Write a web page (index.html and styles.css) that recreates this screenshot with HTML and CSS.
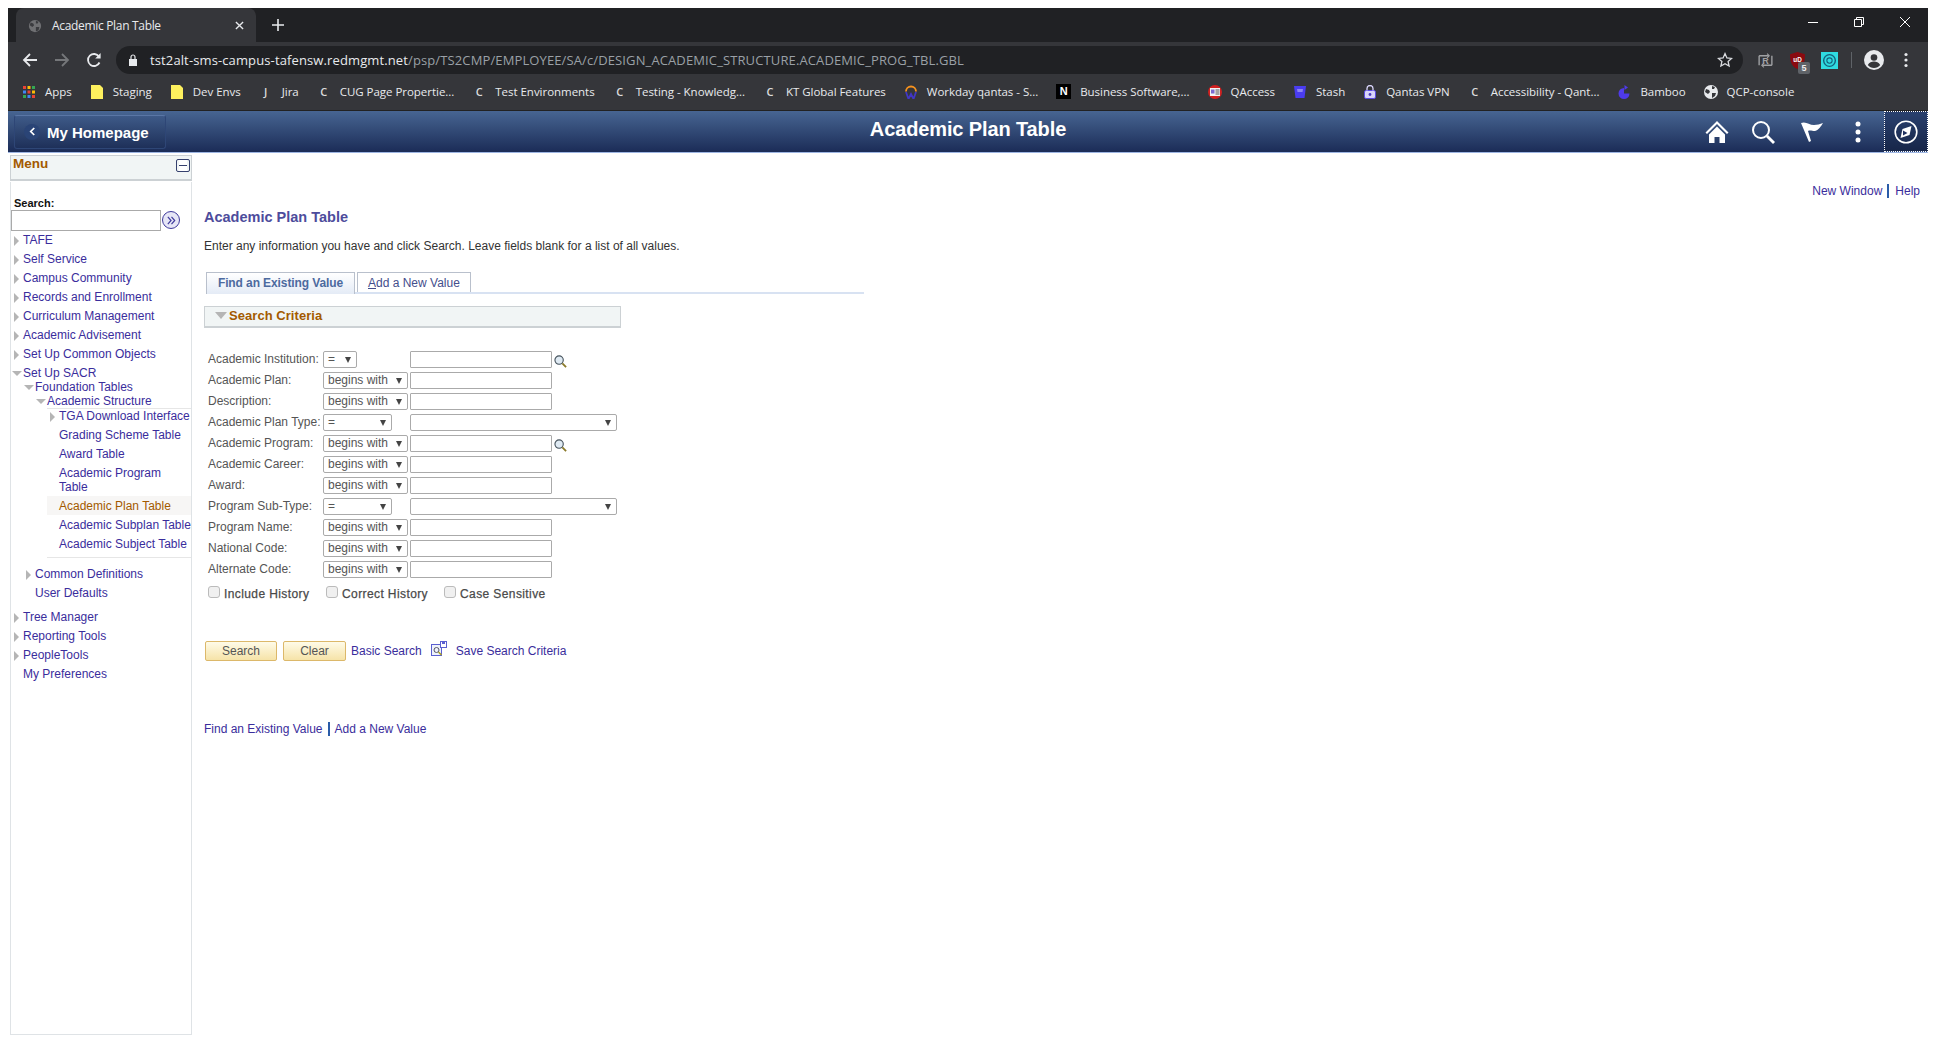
FILE: index.html
```html
<!DOCTYPE html>
<html lang="en">
<head>
<meta charset="utf-8">
<title>Academic Plan Table</title>
<link rel="stylesheet" href="styles.css">
</head>
<body>
<div class="chrome">
  <div class="tabstrip">
    <div class="tab">
      <svg class="fav" viewBox="0 0 16 16"><circle cx="8" cy="8" r="7" fill="#6f7073"/><path d="M3 4l3 1 1 2-2 2-3-2zM9 2l3 1-1 2-2 0zM9 9l4 0-1 4-3 1z" fill="#3a3b3f"/></svg>
      <span class="tab-title">Academic Plan Table</span>
      <svg class="tab-x" viewBox="0 0 10 10"><path d="M1 1l8 8M9 1l-8 8" stroke="#e8eaed" stroke-width="1.5"/></svg>
    </div>
    <svg class="tab-plus" viewBox="0 0 12 12"><path d="M6 0v12M0 6h12" stroke="#e8eaed" stroke-width="1.6"/></svg>
    <div class="winctl">
      <svg viewBox="0 0 12 12"><path d="M1 6.500h10" stroke="#fff"/></svg>
      <svg viewBox="0 0 12 12"><path d="M1.500 3.500h7v7h-7zM3.500 3.500v-2h7v7h-2" fill="none" stroke="#fff"/></svg>
      <svg viewBox="0 0 12 12"><path d="M1 1l10 10M11 1l-10 10" stroke="#fff"/></svg>
    </div>
  </div>
  <div class="toolbar">
    <svg class="nav-ic" viewBox="0 0 16 16"><path d="M15 8H2M8 2L2 8l6 6" fill="none" stroke="#e8eaed" stroke-width="1.8"/></svg>
    <svg class="nav-ic" viewBox="0 0 16 16"><path d="M1 8h13M8 2l6 6-6 6" fill="none" stroke="#75777a" stroke-width="1.8"/></svg>
    <svg class="nav-ic" viewBox="0 0 16 16"><path d="M13.500 10.500A6 6 0 1 1 13 4.600" fill="none" stroke="#e8eaed" stroke-width="1.8"/><path d="M14.600 1v5.400H9.200z" fill="#e8eaed"/></svg>
    <div class="omnibox">
      <svg class="lock" viewBox="0 0 10 12"><path d="M1 5h8v7H1z" fill="#e8eaed"/><path d="M3 5V3a2 2 0 0 1 4 0v2" fill="none" stroke="#e8eaed" stroke-width="1.2"/></svg>
      <span class="url"><span class="host">tst2alt-sms-campus-tafensw.redmgmt.net</span>/psp/TS2CMP/EMPLOYEE/SA/c/DESIGN_ACADEMIC_STRUCTURE.ACADEMIC_PROG_TBL.GBL</span>
      <svg class="star" viewBox="0 0 16 16"><path d="M8 1.600l1.900 4.300 4.700.5-3.500 3.100 1 4.600L8 11.800l-4.100 2.300 1-4.600L1.400 6.400l4.700-.5z" fill="none" stroke="#dadce0" stroke-width="1.3"/></svg>
    </div>
    <div class="ext">
      <svg class="ext-ic" viewBox="0 0 16 16"><path d="M2 3.500V12.500M14 3.500v9M2 3.500h9M14 12.500H5" fill="none" stroke="#a0a1a4" stroke-width="1.300"/><path d="M9.500 1.500l2 2-2 2M6.500 10.500l-2 2 2 2" fill="none" stroke="#a0a1a4"/><text x="8" y="11" class="ext-r">R</text></svg>
      <span class="ublock">
        <svg class="ext-ic" viewBox="0 0 16 16"><path d="M8 0l7 2c0 7-1 11-7 14C2 13 1 9 1 2z" fill="#8a0a10"/><text x="8" y="9.500" class="ub">uD</text></svg>
        <span class="badge">5</span>
      </span>
      <svg class="ext-ic teal" viewBox="0 0 16 16"><rect width="16" height="16" fill="#2fdbe0"/><circle cx="8" cy="8" r="5.500" fill="none" stroke="#14607a" stroke-width="1.300"/><circle cx="8" cy="8" r="2.500" fill="none" stroke="#14607a"/></svg>
      <span class="sep"></span>
      <svg class="acct" viewBox="0 0 20 20"><circle cx="10" cy="10" r="10" fill="#e8eaed"/><circle cx="10" cy="7.500" r="3.300" fill="#35363a"/><path d="M3.800 15c1.500-2.600 3.800-3.500 6.200-3.500s4.700.9 6.200 3.500c-1.500 1.800-3.700 3-6.200 3s-4.700-1.200-6.200-3z" fill="#35363a"/></svg>
      <svg class="kebab" viewBox="0 0 4 16"><circle cx="2" cy="2.500" r="1.600" fill="#e8eaed"/><circle cx="2" cy="8" r="1.600" fill="#e8eaed"/><circle cx="2" cy="13.500" r="1.600" fill="#e8eaed"/></svg>
    </div>
  </div>
  <div class="bookmarks">
    <a class="bm"><svg class="bi" viewBox="0 0 14 14"><path d="M1 1h3v3H1z" fill="#ea4335"/><path d="M5.500 1h3v3h-3z" fill="#fbbc05"/><path d="M10 1h3v3h-3z" fill="#34a853"/><path d="M1 5.500h3v3H1z" fill="#4285f4"/><path d="M5.500 5.500h3v3h-3z" fill="#ea4335"/><path d="M10 5.500h3v3h-3z" fill="#fbbc05"/><path d="M1 10h3v3H1z" fill="#34a853"/><path d="M5.500 10h3v3h-3z" fill="#4285f4"/><path d="M10 10h3v3h-3z" fill="#ea4335"/></svg>Apps</a>
    <a class="bm"><svg class="bi" viewBox="0 0 14 14"><path d="M1 0h9l3 3v11H1z" fill="#fdf05e"/></svg>Staging</a>
    <a class="bm"><svg class="bi" viewBox="0 0 14 14"><path d="M1 0h9l3 3v11H1z" fill="#fdf05e"/></svg>Dev Envs</a>
    <a class="bm"><span class="bl">J</span>Jira</a>
    <a class="bm"><span class="bl">C</span>CUG Page Propertie...</a>
    <a class="bm"><span class="bl">C</span>Test Environments</a>
    <a class="bm"><span class="bl">C</span>Testing - Knowledg...</a>
    <a class="bm"><span class="bl">C</span>KT Global Features</a>
    <a class="bm"><svg class="bi" viewBox="0 0 14 14"><path d="M2 6.500a5 5 0 0 1 10 0" fill="none" stroke="#f6921e" stroke-width="1.800"/><path d="M2 7l2.500 7L7 9l2.500 5L12 7" fill="none" stroke="#4136c4" stroke-width="1.800"/></svg>Workday qantas - S...</a>
    <a class="bm"><span class="bn">N</span>Business Software,...</a>
    <a class="bm"><svg class="bi" viewBox="0 0 14 14"><circle cx="7" cy="7" r="7" fill="#d02020"/><rect x="2" y="3" width="10" height="8" fill="#f4f4f4"/><rect x="3" y="4.500" width="3.500" height="4" fill="#7a6ad0"/><path d="M7.500 5h4M7.500 7h4M7.500 9h4" stroke="#555"/></svg>QAccess</a>
    <a class="bm"><svg class="bi" viewBox="0 0 14 14"><path d="M1 1h12l-1.500 12h-9z" fill="#4a3cf0"/><path d="M4 4h6l-.5 3H4.500z" fill="#8d84f5"/></svg>Stash</a>
    <a class="bm"><svg class="bi" viewBox="0 0 14 14"><rect x="1.500" y="5.500" width="11" height="8" rx="1.500" fill="#d8d4fa" stroke="#5a4ae0"/><path d="M4 5.500V3.500a3 3 0 0 1 6 0v2" fill="none" stroke="#d8d4fa" stroke-width="1.300"/><circle cx="7" cy="9.500" r="1.400" fill="#4a3cc0"/></svg>Qantas VPN</a>
    <a class="bm"><span class="bl">C</span>Accessibility - Qant...</a>
    <a class="bm"><svg class="bi" viewBox="0 0 14 14"><path d="M7 3a5.500 5.500 0 1 0 5.500 5.500H7z" fill="#4f3ae8"/><path d="M7.500 0v5l3.500-2.500z" fill="#4f3ae8"/></svg>Bamboo</a>
    <a class="bm"><svg class="bi" viewBox="0 0 14 14"><circle cx="7" cy="7" r="7" fill="#e8eaed"/><path d="M2 4l3 1 1 2-2 2-3-2zM8 1l3 1-1 2-2 0zM8 8l4 0-1 3-3 2z" fill="#35363a"/></svg>QCP-console</a>
  </div>
</div>
<header class="ps-bar">
  <div class="home-btn">
    <span class="back-circ"><svg viewBox="0 0 8 10"><path d="M6 1L2 5l4 4" fill="none" stroke="#fff" stroke-width="2"/></svg></span>
    <span class="home-text">My Homepage</span>
  </div>
  <div class="ps-title">Academic Plan Table</div>
  <div class="ps-actions">
    <svg class="pa home" viewBox="0 0 24 24"><path d="M12 1L.5 12.500l1.500 1.500L12 4l10 10 1.500-1.500z" fill="#fff"/><path d="M4 14.500L12 6.500l8 8V23h-5.500v-6h-5v6H4z" fill="#fff"/></svg>
    <svg class="pa search" viewBox="0 0 24 24"><circle cx="10" cy="10" r="8" fill="none" stroke="#fff" stroke-width="2"/><path d="M16 16l7 7" stroke="#fff" stroke-width="2.800"/></svg>
    <svg class="pa flag" viewBox="0 0 24 24"><path d="M1 3c5-2 8 2 13 2 3 0 6-1 9-2-2 3-4 7-8 8-3 0-5-1-7 0l3 10-2 1z" fill="#fff"/></svg>
    <svg class="pa dots" viewBox="0 0 6 24"><circle cx="3" cy="4" r="2.500" fill="#fff"/><circle cx="3" cy="12" r="2.500" fill="#fff"/><circle cx="3" cy="20" r="2.500" fill="#fff"/></svg>
    <div class="nav-bar-btn"><svg viewBox="0 0 24 24"><circle cx="12" cy="12" r="10.800" fill="none" stroke="#fff" stroke-width="1.600"/><path d="M6.500 18l2-9 9-3-2 9z" fill="#fff"/><path d="M9 15.500v-5l4.500 2.500z" fill="#1f3160"/></svg></div>
  </div>
</header>
<div class="page">
  <aside class="menu">
    <div class="menu-head"><span>Menu</span><span class="collapse"></span></div>
    <div class="menu-body">
      <div class="search-label">Search:</div>
      <div class="search-row">
        <input class="menu-search" type="text" aria-label="Search">
        <span class="go"><svg viewBox="0 0 12 12"><path d="M2 2l3.500 4L2 10M6 2l3.500 4L6 10" fill="none" stroke="#3f3a9c" stroke-width="1.300"/></svg></span>
      </div>
      <ul class="tree">
        <li class="node"><i class="tw r"></i><a>TAFE</a></li>
        <li class="node"><i class="tw r"></i><a>Self Service</a></li>
        <li class="node"><i class="tw r"></i><a>Campus Community</a></li>
        <li class="node"><i class="tw r"></i><a>Records and Enrollment</a></li>
        <li class="node"><i class="tw r"></i><a>Curriculum Management</a></li>
        <li class="node"><i class="tw r"></i><a>Academic Advisement</a></li>
        <li class="node"><i class="tw r"></i><a>Set Up Common Objects</a></li>
        <li class="node open"><i class="tw d"></i><a>Set Up SACR</a></li>
        <li>
          <ul class="sub">
            <li class="node open lead"><i class="tw d"></i><a>Foundation Tables</a></li>
            <li>
              <ul class="sub">
                <li class="node open lead"><i class="tw d"></i><a>Academic Structure</a></li>
                <li>
                  <ul class="sub leaves">
                    <li class="node lead"><i class="tw r"></i><a>TGA Download Interface</a></li>
                    <li class="node"><i class="tw"></i><a>Grading Scheme Table</a></li>
                    <li class="node"><i class="tw"></i><a>Award Table</a></li>
                    <li class="node"><i class="tw"></i><a>Academic Program<br>Table</a></li>
                    <li class="node current"><i class="tw"></i><a>Academic Plan Table</a></li>
                    <li class="node"><i class="tw"></i><a class="nowrap">Academic Subplan Table</a></li>
                    <li class="node"><i class="tw"></i><a>Academic Subject Table</a></li>
                  </ul>
                </li>
              </ul>
            </li>
            <li class="node common"><i class="tw r"></i><a>Common Definitions</a></li>
            <li class="node"><i class="tw"></i><a>User Defaults</a></li>
          </ul>
        </li>
        <li class="node after"><i class="tw r"></i><a>Tree Manager</a></li>
        <li class="node"><i class="tw r"></i><a>Reporting Tools</a></li>
        <li class="node"><i class="tw r"></i><a>PeopleTools</a></li>
        <li class="node"><i class="tw"></i><a>My Preferences</a></li>
      </ul>
    </div>
  </aside>
  <main class="content">
    <div class="toplinks"><a>New Window</a><span class="vbar"></span><a>Help</a></div>
    <h1 class="pagetitle">Academic Plan Table</h1>
    <p class="instr">Enter any information you have and click Search. Leave fields blank for a list of all values.</p>
    <div class="tabs">
      <span class="ptab active">Find an Existing Value</span>
      <span class="ptab"><u>A</u>dd a New Value</span>
    </div>
    <div class="crit"><i class="crit-arrow"></i>Search Criteria</div>
    <div class="form">
      <label>Academic Institution:</label><span class="sel s-xs">=</span><span class="inp-wrap"><span class="inp"></span><svg class="lens" viewBox="0 0 14 14"><circle cx="5.500" cy="5.500" r="4.500" fill="#dfeaf3" stroke="#45525c" stroke-width="1.200"/><path d="M9 9l4 4" stroke="#8a7a2a" stroke-width="2"/></svg></span>
      <label>Academic Plan:</label><span class="sel">begins with</span><span class="inp"></span>
      <label>Description:</label><span class="sel">begins with</span><span class="inp"></span>
      <label>Academic Plan Type:</label><span class="sel s-md">=</span><span class="sel s-lg"></span>
      <label>Academic Program:</label><span class="sel">begins with</span><span class="inp-wrap"><span class="inp"></span><svg class="lens" viewBox="0 0 14 14"><circle cx="5.500" cy="5.500" r="4.500" fill="#dfeaf3" stroke="#45525c" stroke-width="1.200"/><path d="M9 9l4 4" stroke="#8a7a2a" stroke-width="2"/></svg></span>
      <label>Academic Career:</label><span class="sel">begins with</span><span class="inp"></span>
      <label>Award:</label><span class="sel">begins with</span><span class="inp"></span>
      <label>Program Sub-Type:</label><span class="sel s-md">=</span><span class="sel s-lg"></span>
      <label>Program Name:</label><span class="sel">begins with</span><span class="inp"></span>
      <label>National Code:</label><span class="sel">begins with</span><span class="inp"></span>
      <label>Alternate Code:</label><span class="sel">begins with</span><span class="inp"></span>
    </div>
    <div class="checks">
      <label class="chk"><input type="checkbox">Include History</label>
      <label class="chk"><input type="checkbox">Correct History</label>
      <label class="chk"><input type="checkbox">Case Sensitive</label>
    </div>
    <div class="actions">
      <span class="btn b-search">Search</span>
      <span class="btn b-clear">Clear</span>
      <a class="basic">Basic Search</a>
      <svg class="save-ic" viewBox="0 0 16 16"><rect x=".5" y="3.500" width="10" height="11" fill="#eef2fb" stroke="#5a5fd0"/><circle cx="5.500" cy="9" r="2.500" fill="none" stroke="#556"/><path d="M7.500 11l3 3" stroke="#a8a020" stroke-width="1.500"/><rect x="9.500" y=".5" width="6" height="6" fill="#fff" stroke="#5a5fd0"/><rect x="11" y="1" width="3" height="2" fill="#5a5fd0"/></svg>
      <a class="savesc">Save Search Criteria</a>
    </div>
    <div class="botlinks"><a>Find an Existing Value</a><span class="vbar"></span><a>Add a New Value</a></div>
  </main>
</div>
</body>
</html>
```

FILE: styles.css
```css
* { box-sizing: border-box; }
html, body { margin: 0; background: #fff; }
body { padding: 8px 8px 0; height: 1056px; overflow: hidden; font-family: "Liberation Sans", Arial, sans-serif; font-size: 12px; }
ul { list-style: none; margin: 0; padding: 0; }
svg { display: block; flex: none; }

/* browser chrome */
.chrome { font-family: "Open Sans", "Noto Sans", sans-serif; color: #e8eaed; }
.tabstrip { height: 34px; background: #202124; display: flex; align-items: flex-end; padding-left: 8px; }
.tab { width: 240px; height: 34px; background: #35363a; border-radius: 8px 8px 0 0; display: flex; align-items: center; padding: 1px 0 0 11px; font-size: 12px; }
.fav { width: 14px; height: 14px; margin: 0 10px 0 1px; }
.tab-title { flex: 1; letter-spacing: -.32px; }
.tab-x { width: 9px; height: 9px; margin-right: 12px; }
.tab-plus { width: 12px; height: 12px; margin: 0 0 11px 16px; }
.winctl { margin-left: auto; align-self: flex-start; display: flex; gap: 34px; padding: 8px 17px 0 0; }
.winctl svg { width: 12px; height: 12px; }
.toolbar { height: 36px; background: #35363a; display: flex; align-items: center; padding-left: 14px; }
.nav-ic { width: 16px; height: 16px; margin-right: 16px; }
.omnibox { width: 1627px; height: 28px; margin-left: -2px; background: #202124; border-radius: 14px; display: flex; align-items: center; padding-left: 12px; }
.lock { width: 10px; height: 12px; margin-right: 12px; }
.url { flex: 1; font-size: 13px; letter-spacing: .12px; color: #9aa0a6; white-space: nowrap; }
.host { color: #e8eaed; }
.star { width: 16px; height: 16px; margin-right: 10px; }
.ext { display: flex; align-items: center; margin-left: 14px; }
.ext-ic { width: 17px; height: 17px; }
.ext-r { font: bold 8.500px "Liberation Sans", sans-serif; fill: #a0a1a4; text-anchor: middle; }
.ub { font: bold 6px "Liberation Sans", sans-serif; fill: #fff; text-anchor: middle; }
.ublock { display: block; position: relative; margin-left: 15px; }
.badge { position: absolute; left: 9px; top: 10px; width: 12px; height: 12px; background: #5f6368; border-radius: 2px; font: bold 9px/12px "Liberation Sans", sans-serif; color: #eee; text-align: center; }
.teal { margin-left: 15px; }
.sep { width: 1px; height: 16px; background: #5f6368; margin-left: 13px; }
.acct { width: 20px; height: 20px; margin-left: 12px; }
.kebab { width: 4px; height: 16px; margin-left: 20px; }
.bookmarks { height: 32px; background: #35363a; display: flex; align-items: center; padding: 0 0 5px 14px; gap: 18px; font-size: 11.5px; white-space: nowrap; letter-spacing: -.03px; color: #e8eaed; }
.bm { display: flex; align-items: center; gap: 9px; }
.bi { width: 14px; height: 14px; }
.bl { width: 14px; text-align: center; font-size: 11px; font-weight: 600; color: #ddd; }
.bn { width: 15px; height: 15px; background: #000; color: #fff; font: bold 11px/15px "Liberation Sans", sans-serif; text-align: center; }

/* PeopleSoft banner */
.ps-bar { height: 43px; display: flex; align-items: center; background: linear-gradient(#476592, #1b2c57); border-top: 1px solid #222; border-bottom: 1px solid #9db5e2; position: relative; color: #fff; padding-left: 6px; }
.home-btn { width: 152px; height: 34px; border-radius: 3px; border: 1px solid #2e4676; border-top-color: #5a76a5; background: linear-gradient(#3e5a88, #1e3059); display: flex; align-items: center; padding-left: 9px; gap: 7px; }
.back-circ { width: 16px; height: 16px; border-radius: 50%; background: #2a4476; display: flex; align-items: center; justify-content: center; }
.back-circ svg { width: 7px; height: 9px; }
.home-text { font-size: 15px; font-weight: bold; padding-top: 1px; }
.ps-title { flex: 1; text-align: center; font-size: 20px; font-weight: bold; letter-spacing: -.12px; margin-left: -158px; margin-top: -5px; }
.ps-actions { position: absolute; right: 0; top: 0; bottom: 0; display: flex; align-items: center; }
.pa { width: 24px; height: 24px; }
.home { margin-right: 22px; }
.search { margin-right: 25px; }
.flag { margin-right: 31px; }
.dots { width: 6px; margin-right: 23px; }
.nav-bar-btn { width: 44px; height: 100%; border: 1px dotted #fff; background: linear-gradient(#29406e, #172649); display: flex; align-items: center; justify-content: center; }
.nav-bar-btn svg { width: 24px; height: 24px; }

/* page */
.page { display: flex; align-items: flex-start; }
.menu { width: 182px; margin: 2px 0 0 2px; flex: none; color: #3a2d9c; }
.menu-head { height: 26px; background: #f1f5f5; border: 1px solid #ccd1d4; border-bottom-width: 2px; display: flex; justify-content: space-between; padding: 0 1px 0 2px; font-size: 13.500px; font-weight: bold; color: #a35a00; }
.collapse { width: 14px; height: 13px; margin-top: 3px; border: 1px solid #35406e; border-radius: 2px; background: linear-gradient(#fff 5px, #35406e 5px, #35406e 6.500px, #fff 6.500px); background-clip: content-box; padding: 0 2px; }
.menu-body { height: 853px; border: 1px solid #dfe3e6; border-top: 0; padding-top: 14px; margin-top: 1px; }
.search-label { font-size: 11px; font-weight: bold; color: #111; padding-left: 3px; line-height: 14px; height: 14px; }
.search-row { display: flex; align-items: center; height: 20px; }
.menu-search { width: 150px; height: 21px; border: 1px solid #aaa; padding: 0; margin: 0 1px 0 0; background: #fff; }
.go { width: 18px; height: 18px; border-radius: 50%; border: 1px solid #3f3a9c; background: #e6e6f6; display: flex; align-items: center; justify-content: center; }
.go svg { width: 11px; height: 11px; }
.tree { font-size: 12px; }
.node { display: flex; line-height: 14px; padding: 3px 0 2px; }
.node.open { padding-bottom: 0; }
.node.lead { padding-top: 0; }
.tw { width: 12px; flex: none; position: relative; display: block; }
.tw.r::before { content: ""; position: absolute; left: 3px; top: 3px; border-left: 5px solid #b5b5b5; border-top: 5px solid transparent; border-bottom: 5px solid transparent; }
.tw.d::before { content: ""; position: absolute; left: 1px; top: 5px; border-top: 5px solid #b5b5b5; border-left: 5px solid transparent; border-right: 5px solid transparent; }
.sub { padding-left: 12px; }
.sub.leaves { padding: 0 0 4px; margin-left: 12px; border-top: 1px solid #e6e6e6; border-bottom: 1px solid #e6e6e6; }
.current { background: #f7f6f5; color: #a35a00; }
.nowrap { white-space: nowrap; }
.common { margin-top: 6px; }
.after { margin-top: 5px; }

/* content */
.content { flex: 1; padding: 0 8px 0 12px; color: #333; }
.content a { color: #3a2d9c; }
.toplinks { display: flex; justify-content: flex-end; align-items: center; height: 14px; margin-top: 31px; }
.vbar { width: 2px; height: 14px; background: #2a5ca8; margin: 0 5px; }
.toplinks .vbar { margin: 0 6px 0 5px; }
.pagetitle { margin: 10px 0 0; font-size: 14.500px; line-height: 18px; font-weight: bold; color: #4d4c9c; }
.instr { margin: 13px 0 0; line-height: 14px; }
.tabs { display: flex; margin: 19px 0 0 2px; width: 658px; height: 22px; border-bottom: 2px solid #d8e2f2; gap: 2px; align-items: flex-start; }
.ptab { height: 20px; padding: 0 10px; line-height: 20px; border: 1px solid #b9c0cc; border-bottom: 0; color: #444e8c; white-space: nowrap; }
.ptab.active { width: 149px; height: 22px; padding: 0; text-align: center; letter-spacing: -.1px; background: linear-gradient(#fff, #e4ebf6); font-weight: bold; color: #4d6a9f; }
.crit { width: 417px; height: 22px; margin-top: 12px; padding: 0 0 2px 10px; background: #f1f5f5; border: 1px solid #ccd1d4; border-width: 1px 1px 2px; display: flex; align-items: center; font-size: 13px; font-weight: bold; color: #a35a00; letter-spacing: .05px; }
.crit-arrow { display: block; margin-right: 2px; border-top: 7px solid #b5b5b5; border-left: 6px solid transparent; border-right: 6px solid transparent; }
.form { display: grid; grid-template-columns: 115px 87px 1fr; row-gap: 4px; margin: 23px 0 0 4px; align-items: center; }
.form label { color: #555; line-height: 17px; white-space: nowrap; }
.sel { height: 17px; width: 85px; border: 1px solid #aaa; border-radius: 2px; line-height: 15px; padding-left: 4px; display: block; position: relative; color: #555; }
.sel::after { content: ""; position: absolute; right: 5px; top: 5px; border-top: 6px solid #444; border-left: 3px solid transparent; border-right: 3px solid transparent; }
.s-xs { width: 34px; }
.s-md { width: 69px; }
.s-lg { width: 207px; }
.inp { display: block; width: 142px; height: 17px; border: 1px solid #aaa; border-radius: 1px; background: #fff; }
.inp-wrap { display: flex; align-items: center; gap: 2px; }
.lens { width: 13px; height: 13px; margin-top: 3px; }
.checks { display: flex; margin: 6px 0 0 4px; height: 20px; align-items: center; }
.chk { width: 118px; display: flex; align-items: center; color: #444; -webkit-text-stroke: .25px #555; letter-spacing: .4px; white-space: nowrap; }
.chk input { appearance: none; width: 12px; height: 12px; margin: -4px 4px 0 0; border: 1px solid #bbb; border-radius: 3px; background: #f0f0f0; }
.actions { display: flex; align-items: center; margin: 36px 0 0 1px; height: 22px; }
.btn { height: 20px; border: 1px solid #dcb86a; border-radius: 2px; background: linear-gradient(#fffbe8, #f6e3a8); text-align: center; line-height: 18px; color: #555; }
.b-search { width: 72px; }
.b-clear { width: 63px; margin-left: 6px; }
.basic { margin-left: 5px; }
.save-ic { width: 16px; height: 16px; margin: -4px 0 0 9px; }
.savesc { margin-left: 9px; }
.botlinks { display: flex; align-items: center; margin-top: 60px; }
```
